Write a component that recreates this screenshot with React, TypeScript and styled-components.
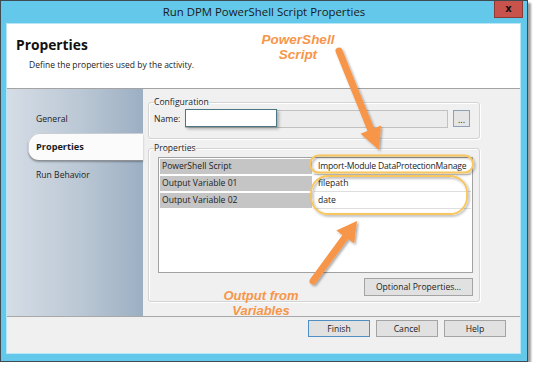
import React from "react";
import styled, { createGlobalStyle } from "styled-components";

const GlobalStyle = createGlobalStyle`
  html, body { margin: 0; padding: 0; background: #ffffff; }
  body { font-family: "Open Sans", "Noto Sans", sans-serif; color: #1b1b1b; }
  * { box-sizing: border-box; }
`;

const UI_FONT = `"Open Sans", "Noto Sans", sans-serif`;

const Window = styled.div`
  position: relative;
  width: 528px;
  height: 362px;
  border: 1px solid #3f4b52;
  background: #63c8ea;
  box-shadow: 3px 3px 2px rgba(0, 0, 0, 0.38);
  display: flex;
  flex-direction: column;
  padding: 0 6px 7px 5px;
`;

const TitleBar = styled.div`
  height: 22px;
  margin: 0 -6px 0 -5px;
  display: grid;
  grid-template-columns: 1fr auto 1fr;
  align-items: start;
`;

const Title = styled.div`
  grid-column: 2;
  font-family: ${UI_FONT};
  font-size: 11.4px;
  line-height: 22px;
  color: #1a1a1a;
  white-space: nowrap;
`;

const CloseButton = styled.div`
  grid-column: 3;
  justify-self: end;
  margin-right: 4px;
  width: 29px;
  height: 17px;
  background: #c8534c;
  border: 1px solid #8c3a35;
  border-top: none;
  display: flex;
  align-items: center;
  justify-content: center;
  font-family: "DejaVu Sans", sans-serif;
  font-weight: bold;
  font-size: 10px;
  line-height: 1;
  color: #111;
`;

const Client = styled.div`
  flex: 1;
  display: flex;
  flex-direction: column;
  background: #f0f0f0;
  border: 1px solid #b7e6f6;
`;

const Header = styled.div`
  height: 65px;
  background: #ffffff;
  border-bottom: 1px solid #a3a3a3;
  padding: 12px 0 0 9px;
`;

const HeaderTitle = styled.div`
  font-family: ${UI_FONT};
  font-weight: bold;
  font-size: 13.8px;
  line-height: 18px;
  color: #111;
`;

const HeaderDesc = styled.div`
  font-family: ${UI_FONT};
  font-size: 8.5px;
  line-height: 12px;
  margin: 5px 0 0 13px;
  color: #222;
`;

const Body = styled.div`
  height: 227px;
  display: flex;
`;

const Nav = styled.div`
  width: 136px;
  background: linear-gradient(90deg, #d5dde6 0%, #bac7d4 55%, #9cafc3 100%);
  display: flex;
  flex-direction: column;
  gap: 1px;
  padding-top: 16px;
`;

const NavItem = styled.div<{ $active?: boolean }>`
  height: 27px;
  margin-left: 21px;
  padding-left: 8px;
  display: flex;
  align-items: center;
  font-family: ${UI_FONT};
  font-size: ${(p) => (p.$active ? "9.2px" : "8.6px")};
  font-weight: ${(p) => (p.$active ? "bold" : "normal")};
  color: #1d1d1d;
  border-radius: 11px 0 0 11px;
  background: ${(p) => (p.$active ? "#fbfbfb" : "transparent")};
  box-shadow: ${(p) =>
    p.$active
      ? "inset 1px 1px 0 #c9ced5, 0 1px 0 #8e9297, 0 2px 2px rgba(0,0,0,0.3)"
      : "none"};
`;

const Main = styled.div`
  flex: 1;
  padding: 8px 40px 0 5px;
  display: flex;
  flex-direction: column;
`;

const Group = styled.fieldset<{ $gapTop?: number }>`
  margin: ${(p) => p.$gapTop ?? 0}px 0 0 0;
  padding: 0 5px;
  border: 1px solid #d3d3d3;
  border-radius: 3px;
  box-shadow: inset 1px 1px 0 #ffffff, 1px 1px 0 #ffffff;
  min-width: 0;
`;

const Legend = styled.legend`
  padding: 0;
  font-family: ${UI_FONT};
  font-size: 8.6px;
  line-height: 11px;
  color: #1d1d1d;
`;

const NameRow = styled.div`
  display: flex;
  align-items: center;
  margin: 1px 0 0 0;
  padding-bottom: 10px;
  height: 29px;
`;

const Label = styled.span`
  font-family: ${UI_FONT};
  font-size: 8.6px;
  width: 31px;
  color: #1d1d1d;
`;

const FieldTrack = styled.div`
  width: 263px;
  height: 18px;
  background: #ececec;
  border: 1px solid #c1c1c1;
  display: flex;
  align-items: flex-start;
`;

const FocusBox = styled.div`
  width: 92px;
  height: 18px;
  margin: -2px 0 0 -1px;
  background: #ffffff;
  border: 1px solid #4b7785;
  box-shadow: 2px 2px 3px rgba(0, 0, 0, 0.28);
`;

const DotsButton = styled.div`
  width: 17px;
  height: 17px;
  margin-left: 5px;
  background: #e5e5e5;
  border: 1px solid #8aa1b8;
  font-family: ${UI_FONT};
  font-size: 9px;
  line-height: 18px;
  text-align: center;
  color: #222;
`;

const Table = styled.div`
  margin: 3px 1px 0 4px;
  height: 116px;
  background: #ffffff;
  border: 1px solid #a2a2a2;
  padding: 1px 1px 0 1px;
`;

const Row = styled.div`
  display: grid;
  grid-template-columns: 152px 1fr;
  column-gap: 2px;
  height: 17px;
`;

const KeyCell = styled.div`
  height: 15px;
  background: #c5c5c5;
  padding-left: 2px;
  font-family: ${UI_FONT};
  font-size: 8.6px;
  line-height: 15px;
  color: #1d1d1d;
  white-space: nowrap;
  overflow: hidden;
`;

const ValueCell = styled.div<{ $tight?: boolean }>`
  height: 16px;
  border-bottom: 1px solid #dedede;
  padding-left: 4px;
  font-family: ${UI_FONT};
  font-size: 8.6px;
  letter-spacing: ${(p) => (p.$tight ? "-0.2px" : "0")};
  line-height: 15px;
  color: #1d1d1d;
  white-space: nowrap;
`;

const GroupFooter = styled.div`
  display: flex;
  justify-content: flex-end;
  padding: 5px 1px 5px 0;
`;

const Button = styled.div<{ $w: number; $h?: number; $default?: boolean }>`
  width: ${(p) => p.$w}px;
  height: ${(p) => p.$h ?? 17}px;
  background: #e1e1e1;
  border: 1px solid ${(p) => (p.$default ? "#4f8fc4" : "#a4a4a4")};
  display: flex;
  align-items: center;
  justify-content: center;
  font-family: ${UI_FONT};
  font-size: 8.6px;
  color: #1d1d1d;
`;

const BottomBar = styled.div`
  flex: 1;
  border-top: 1px solid #a8a8a8;
  display: flex;
  justify-content: flex-end;
  align-items: flex-start;
  gap: 6px;
  padding: 3px 14px 0 0;
`;

const Overlay = styled.div`
  position: absolute;
  left: -1px;
  top: -1px;
  width: 528px;
  height: 362px;
  pointer-events: none;
`;

const Drawing = styled.svg`
  position: absolute;
  left: 0;
  top: 0;
`;

const Note = styled.div<{ $x: number; $y: number; $size: number }>`
  position: absolute;
  left: ${(p) => p.$x}px;
  top: ${(p) => p.$y}px;
  width: 110px;
  text-align: center;
  font-family: "Liberation Sans", Arial, sans-serif;
  font-weight: bold;
  font-style: italic;
  font-size: ${(p) => p.$size}px;
  line-height: 14.5px;
  color: #f7964a;
`;

const ORANGE = "#f7964a";

export default function App() {
  return (
    <>
      <GlobalStyle />
      <Window>
        <TitleBar>
          <Title>Run DPM PowerShell Script Properties</Title>
          <CloseButton>x</CloseButton>
        </TitleBar>
        <Client>
          <Header>
            <HeaderTitle>Properties</HeaderTitle>
            <HeaderDesc>Define the properties used by the activity.</HeaderDesc>
          </Header>
          <Body>
            <Nav>
              <NavItem>General</NavItem>
              <NavItem $active>Properties</NavItem>
              <NavItem>Run Behavior</NavItem>
            </Nav>
            <Main>
              <Group>
                <Legend>Configuration</Legend>
                <NameRow>
                  <Label>Name:</Label>
                  <FieldTrack>
                    <FocusBox />
                  </FieldTrack>
                  <DotsButton>...</DotsButton>
                </NameRow>
              </Group>
              <Group $gapTop={4}>
                <Legend>Properties</Legend>
                <Table>
                  <Row>
                    <KeyCell>PowerShell Script</KeyCell>
                    <ValueCell $tight>Import-Module DataProtectionManage</ValueCell>
                  </Row>
                  <Row>
                    <KeyCell>Output Variable 01</KeyCell>
                    <ValueCell>filepath</ValueCell>
                  </Row>
                  <Row>
                    <KeyCell>Output Variable 02</KeyCell>
                    <ValueCell>date</ValueCell>
                  </Row>
                </Table>
                <GroupFooter>
                  <Button $w={109} $h={18}>Optional Properties...</Button>
                </GroupFooter>
              </Group>
            </Main>
          </Body>
          <BottomBar>
            <Button $w={62} $default>Finish</Button>
            <Button $w={62}>Cancel</Button>
            <Button $w={62}>Help</Button>
          </BottomBar>
        </Client>
        <Overlay>
          <Drawing width="528" height="362" viewBox="0 0 528 362">
            <defs>
              <filter id="sh" x="-20%" y="-20%" width="140%" height="140%">
                <feDropShadow dx="1.5" dy="1.5" stdDeviation="1.2" floodColor="#000" floodOpacity="0.35" />
              </filter>
            </defs>
            <g filter="url(#sh)" fill="none" stroke="#f8c65c" strokeWidth="1.8">
              <rect x="310" y="155.5" width="163" height="17" rx="8.5" />
              <rect x="311" y="176" width="156" height="38" rx="17" />
            </g>
            <g filter="url(#sh)">
              <line x1="339" y1="51" x2="370.8" y2="129.6" stroke={ORANGE} strokeWidth="7" strokeLinecap="round" />
              <polygon points="379,150 360.6,133.7 381,125.5" fill={ORANGE} />
              <line x1="313" y1="281" x2="345.2" y2="237.1" stroke={ORANGE} strokeWidth="7" strokeLinecap="round" />
              <polygon points="357,221 354.1,243.6 336.3,230.6" fill={ORANGE} />
            </g>
          </Drawing>
          <Note $x={243} $y={33} $size={13.5}>
            PowerShell
            <br />
            Script
          </Note>
          <Note $x={206} $y={289} $size={13}>
            Output from
            <br />
            Variables
          </Note>
        </Overlay>
      </Window>
    </>
  );
}
